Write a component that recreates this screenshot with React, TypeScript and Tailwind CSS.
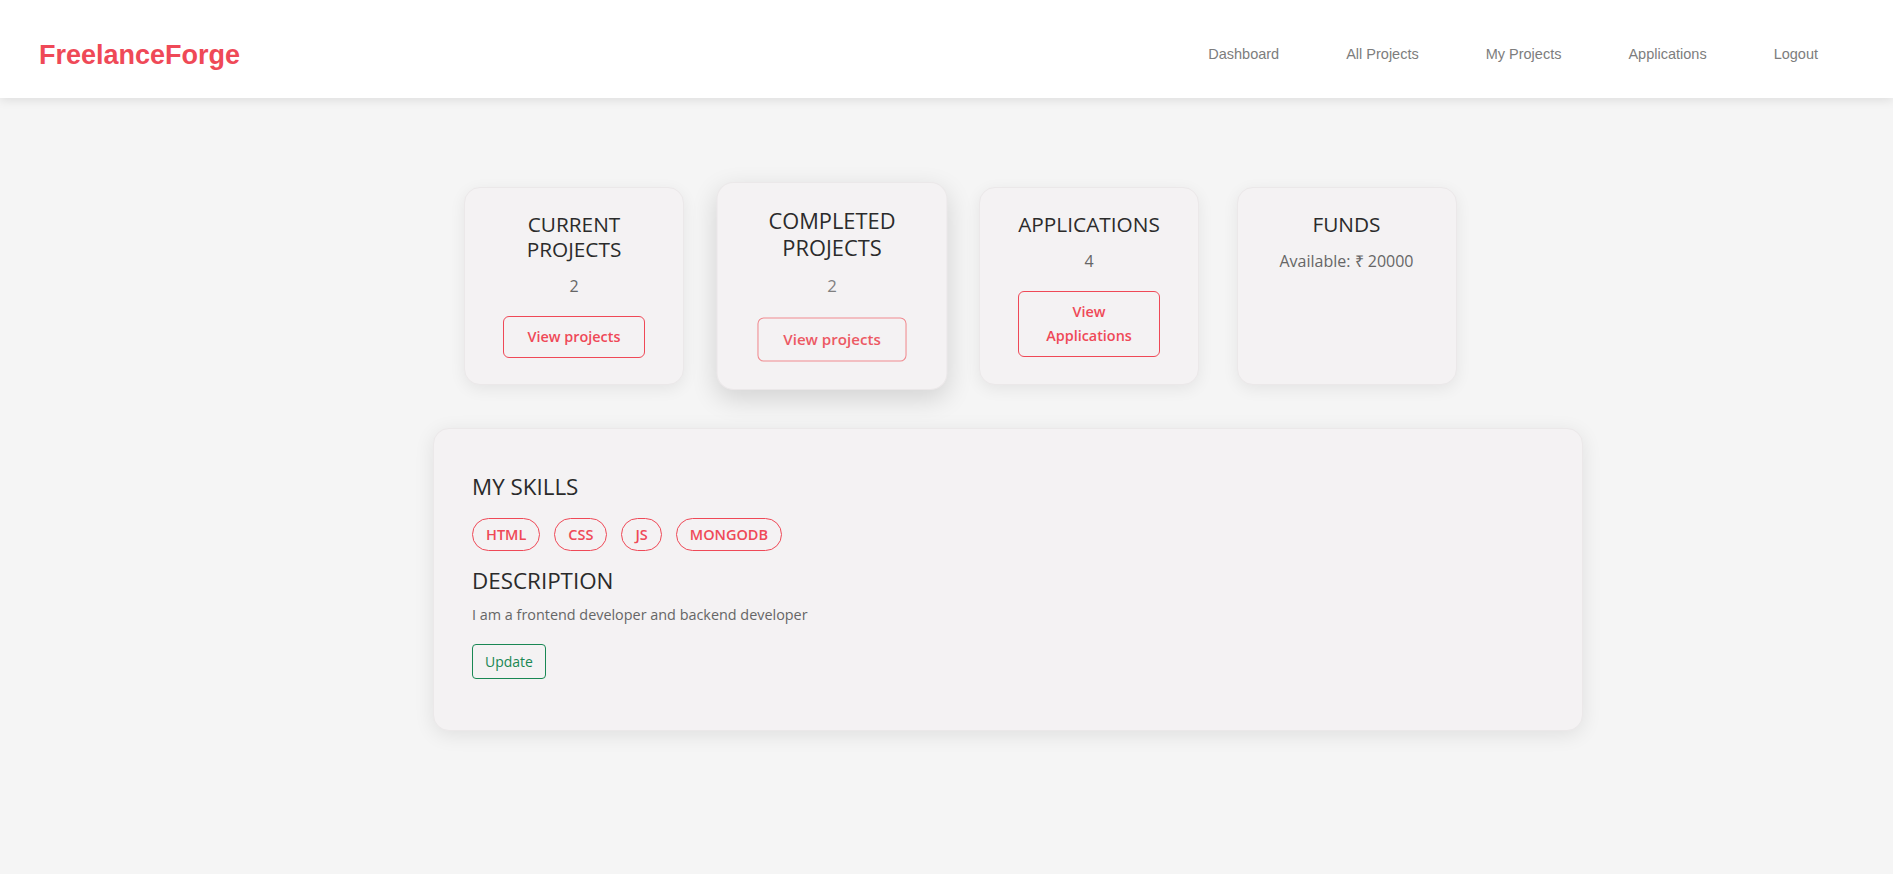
const NAV = ["Dashboard", "All Projects", "My Projects", "Applications", "Logout"];
const SKILLS = ["HTML", "CSS", "JS", "MONGODB"];

const STATS = [
  { title: "CURRENT PROJECTS", value: "2", action: "View projects" },
  { title: "COMPLETED PROJECTS", value: "2", action: "View projects", hovered: true },
  { title: "APPLICATIONS", value: "4", action: "View Applications" },
  { title: "FUNDS", value: "Available: ₹ 20000" },
];

function StatCard({ s }: { s: (typeof STATS)[number] }) {
  return (
    <div
      className={
        s.hovered
          ? "w-[220px] rounded-2xl border border-[#ebe8e9] bg-[#f4f2f3] px-6 pt-6 pb-[26px] flex flex-col items-center text-center scale-105 shadow-[0_8px_24px_rgba(0,0,0,0.14)]"
          : "w-[220px] rounded-2xl border border-[#ebe8e9] bg-[#f4f2f3] px-6 pt-6 pb-[26px] flex flex-col items-center text-center shadow-[0_4px_16px_rgba(0,0,0,0.07)]"
      }
    >
      <h3 className="text-[20.8px] leading-[25px] font-medium text-[#2b2b2b] mb-3">{s.title}</h3>
      <p className={s.hovered ? "text-base leading-6 text-[#808080] mb-[18px]" : "text-base leading-6 text-[#666] mb-[18px]"}>
        {s.value}
      </p>
      {s.action && (
        <button
          className={
            s.hovered
              ? "w-[142px] px-5 py-2 text-[14.4px] leading-6 font-semibold rounded-md border border-[#f08a8f] text-[#ec5963]"
              : "w-[142px] px-5 py-2 text-[14.4px] leading-6 font-semibold rounded-md border border-[#ef4957] text-[#ef4957]"
          }
        >
          {s.action}
        </button>
      )}
    </div>
  );
}

export default function App() {
  return (
    <div className="min-h-[874px] bg-[#f5f5f5] font-['Open_Sans',sans-serif]">
      <header className="h-[98px] bg-white flex items-center justify-between pt-[12px] pl-[39px] pr-[75px] shadow-[0_2px_10px_rgba(0,0,0,0.1)]">
        <div className="font-['Liberation_Sans',Arial,sans-serif] font-bold text-[27px] text-[#ef4957]">FreelanceForge</div>
        <nav className="flex gap-[67px]">
          {NAV.map((n) => (
            <a key={n} href="#" className="font-['Liberation_Sans',Arial,sans-serif] text-[14.5px] text-[#7d7d7d]">
              {n}
            </a>
          ))}
        </nav>
      </header>

      <main className="pt-[89px] pb-16">
        <div className="flex items-stretch gap-[37.5px] pl-[464px]">
          {STATS.map((s) => (
            <StatCard key={s.title} s={s} />
          ))}
        </div>

        <section className="ml-[433px] mt-[43px] w-[1150px] rounded-2xl border border-[#ebe8e9] bg-[#f4f2f3] px-[38px] pt-[44px] pb-[51px] shadow-[0_4px_20px_rgba(0,0,0,0.09)]">
          <h2 className="text-[22.4px] leading-[27px] font-medium text-[#2a2a2a] mb-[18px]">MY SKILLS</h2>
          <div className="flex gap-[14px]">
            {SKILLS.map((k) => (
              <span
                key={k}
                className="px-[13px] py-[5px] text-[14.5px] leading-[21px] font-semibold rounded-full border border-[#ef4957] text-[#ef4957]"
              >
                {k}
              </span>
            ))}
          </div>
          <h2 className="mt-[16px] text-[22.4px] leading-[27px] font-medium text-[#2a2a2a] mb-[10px]">DESCRIPTION</h2>
          <p className="text-[14.4px] leading-[21.6px] text-[#666]">I am a frontend developer and backend developer</p>
          <button className="mt-[18px] px-3 py-[6px] text-[14px] leading-[21px] rounded-[4px] border border-[#198754] text-[#198754]">
            Update
          </button>
        </section>
      </main>
    </div>
  );
}
